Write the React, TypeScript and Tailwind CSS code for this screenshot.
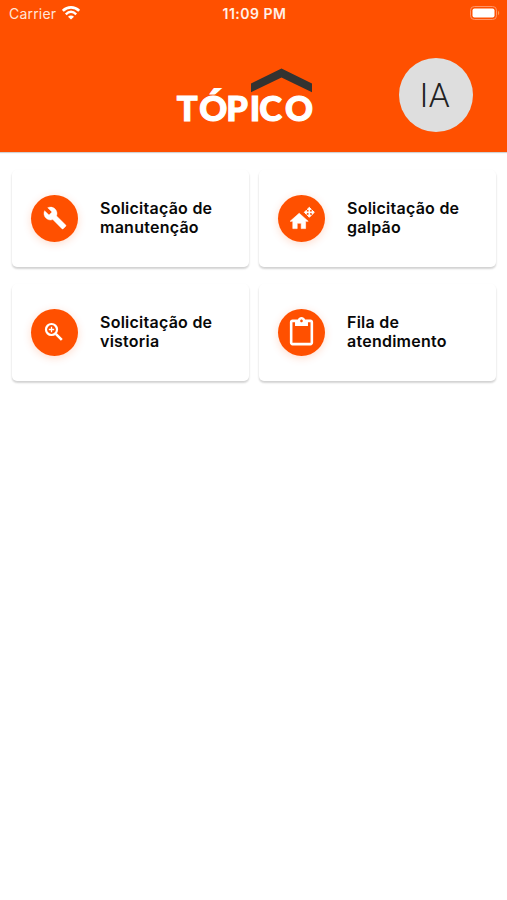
import React from "react";
import { MdContentPaste } from "react-icons/md";

interface MenuCardProps {
  icon: React.ReactNode;
  lines: string[];
}

const WifiIcon = () => (
  <svg viewBox="0 0 18 14" className="h-[14px] w-[18px]" fill="none">
    <path d="M0.8 4.9C5.5.2 12.5.2 17.2 4.9" stroke="white" strokeWidth="2.7" />
    <path d="M3.8 8.3C7 5.3 11 5.3 14.2 8.3" stroke="white" strokeWidth="2.4" />
    <path d="M9 13.6 6 10.7C7.8 9 10.2 9 12 10.7Z" fill="white" />
  </svg>
);

const BatteryIcon = () => (
  <svg viewBox="0 0 30 14" className="h-[14px] w-[30px]" fill="none">
    <rect x="0.5" y="0.5" width="26" height="13" rx="3.8" stroke="#ff9468" />
    <rect x="2.5" y="2.5" width="22" height="9" rx="2" fill="white" />
    <path d="M28 4.8C29.6 5.5 29.6 8.5 28 9.2Z" fill="#ff9e4d" />
  </svg>
);

const Logo = () => (
  <svg viewBox="0 0 140 68" className="h-[68px] w-[140px]">
    <path d="M76 18.6 106.5 3.4 137 18.6V27.2L106.5 12.4 76 27.2Z" fill="#333331" />
    <text
      x="1.8 24.3 51.2 74.8 84.2 110"
      y="56.3"
      stroke="white"
      strokeWidth="1.1"
      className="fill-white font-['Lato',sans-serif] text-[34.5px] font-black"
    >
      TÓPICO
    </text>
  </svg>
);

const WrenchIcon = () => (
  <svg
    viewBox="0 0 24 24"
    className="size-[24px]"
    fill="white"
    stroke="white"
    strokeWidth="0.4"
  >
    <path d="M22.7 19l-9.1-9.1c.9-2.3.4-5-1.5-6.9-2-2-5-2.4-7.4-1.3L9 6 6 9 1.6 4.7C.4 7.1.9 10.1 2.9 12.1c1.9 1.9 4.6 2.4 6.9 1.5l9.1 9.1c.4.4 1 .4 1.4 0l2.3-2.3c.5-.4.5-1.1.1-1.4z" />
  </svg>
);

const ZoomIcon = () => (
  <svg
    viewBox="0 0 24 24"
    className="mr-px size-[24px]"
    fill="none"
    stroke="white"
    strokeWidth="2.2"
  >
    <circle cx="9.5" cy="9.5" r="5.5" />
    <path d="M13.8 13.8 19.8 19.8" strokeWidth="2.6" />
    <path d="M9.5 6.8V12.2M6.8 9.5H12.2" strokeWidth="1.3" />
  </svg>
);

const WarehouseIcon = () => (
  <svg viewBox="0 0 28 26" className="h-[26px] w-[28px]">
    <path
      d="M11.2 8.2 20.2 16.3H17.6V23.6H13.2V18.2H9.2V23.6H4.8V16.3H2.1Z"
      fill="white"
      stroke="white"
      strokeWidth="0.6"
      strokeLinejoin="round"
    />
    <g fill="white" stroke="white" strokeWidth="0.9" strokeLinejoin="round">
      <path d="M21.3 2.3 23.4 4.4H19.2Z" />
      <path d="M21.3 12.3 23.4 10.2H19.2Z" />
      <path d="M16.3 7.3 18.4 5.2V9.4Z" />
      <path d="M26.3 7.3 24.2 5.2V9.4Z" />
      <path d="M21 4h.6v6.6h-.6zM18 7h6.6v.6h-6.6z" />
    </g>
  </svg>
);

const MenuCard = ({ icon, lines }: MenuCardProps) => (
  <button className="flex h-[97px] items-center rounded-[5px] bg-white pb-px pl-[19px] text-left shadow-[0_2px_2px_rgba(0,0,0,0.15),0_1px_3px_rgba(0,0,0,0.05)]">
    <span className="flex size-[47px] shrink-0 items-center justify-center rounded-full bg-[#ff5000] text-white shadow-[0_2px_8px_rgba(255,80,0,0.2)]">
      {icon}
    </span>
    <span className="ml-[22px] text-[16px] leading-[19.5px] font-semibold tracking-[0.25px] text-[#080808]">
      {lines.map((line) => (
        <span key={line} className="block whitespace-nowrap">
          {line}
        </span>
      ))}
    </span>
  </button>
);

export default function App() {
  return (
    <div className="h-[900px] w-full overflow-hidden bg-white font-['Inter',sans-serif]">
      <header className="h-[152px] bg-[#ff5000] shadow-[0_1px_1px_rgba(0,0,0,0.18)]">
        <div className="grid h-[28px] grid-cols-3 items-center pr-[7px] pb-[2px] pl-[9px] text-white">
          <div className="flex items-center gap-[6px] text-[14px] tracking-[0.2px] text-[#ffe5d8]">
            Carrier
            <WifiIcon />
          </div>
          <span className="text-center text-[14px] font-semibold tracking-[0.5px] whitespace-nowrap text-[#fff0e8]">
            11:09 PM
          </span>
          <div className="flex justify-end">
            <BatteryIcon />
          </div>
        </div>
        <div className="flex items-start justify-between pr-[34px] pl-[175px]">
          <div className="pt-[37px]">
            <Logo />
          </div>
          <div className="mt-[30px] flex size-[74px] items-center justify-center rounded-full bg-[#dedede]">
            <span className="pt-[2px] pr-[3px] font-['Roboto',sans-serif] text-[33.5px] font-light text-[#222]">
              IA
            </span>
          </div>
        </div>
      </header>
      <main className="grid grid-cols-2 gap-x-[10px] gap-y-[17px] pt-[18px] pr-[11px] pl-[12px]">
        <MenuCard icon={<WrenchIcon />} lines={["Solicitação de", "manutenção"]} />
        <MenuCard icon={<WarehouseIcon />} lines={["Solicitação de", "galpão"]} />
        <MenuCard icon={<ZoomIcon />} lines={["Solicitação de", "vistoria"]} />
        <MenuCard
          icon={<MdContentPaste className="size-[31px]" />}
          lines={["Fila de", "atendimento"]}
        />
      </main>
    </div>
  );
}
